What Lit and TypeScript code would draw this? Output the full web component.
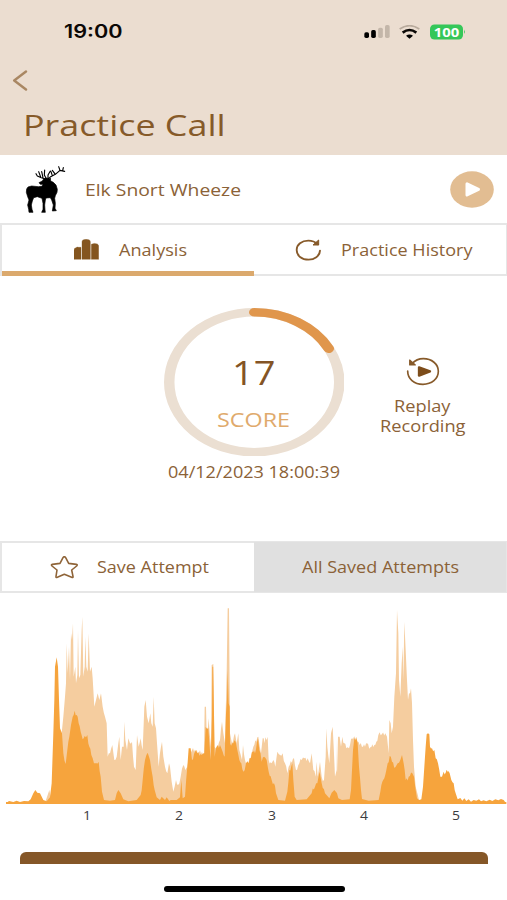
import { LitElement, html, svg, css } from "lit";
import { customElement, property } from "lit/decorators.js";

type Point = [number, number];

const shift = (dx: number, pts: number[]): Point[] => {
  const out: Point[] = [];
  for (let i = 0; i < pts.length; i += 2) out.push([pts[i] + dx, pts[i + 1]]);
  return out;
};

// Both series use a 1521 x 630 canvas, floor at y = 611.
const FLOOR = 611;

const REFERENCE_CALL: Point[] = [
  ...shift(0, [135,608,143,585,148,570,152,590,160,560,178,430,185,400,190,350,195,290,198,250,200,130,203,220,207,140,210,240,213,100,216,120,219,70,221,230,226,200,228,250,232,225,234,90,237,235,241,225,245,90,247,50,250,230,254,200,256,110,259,200,263,215,266,100,270,215,275,200,278,235,283,320,288,300,293,280,298,300,303,280,308,320,315,350,320,370,323,470,330,460,337,435,343,480,350,470,355,430,358,410,362,480,366,440,371,440,373,365,376,420,381,450,385,415,390,430,396,425,402,500,407,510,411,405,416,440,422,415,428,450,433,320,437,300,441,350,446,370,451,340,454,370,458,380,461,290,464,370,468,385,471,430,476,500,483,440,486,425,490,470,495,500,502,520,507,490]),
  ...shift(510, [0,500,5,545,10,575,18,540,24,555,32,530,40,495,46,510,52,500,60,450,102,460,104,320,108,320,110,400,114,380,116,355,119,400,123,440,125,195,130,192,133,440,140,440,150,420,156,365,160,400,165,430,167,340,170,220,173,25,177,25,180,400,186,430,195,400,200,430,205,400,208,450,216,480,219,435,225,480,235,490,245,460,250,440,265,410,273,460,278,415,284,430,286,412,290,420,293,410,296,480,305,490,310,480,316,500,322,455,330,465,338,460,345,490,352,520,356,500,372,475,378,510,388,490,395,480,403,475,413,475,420,490,425,460,430,510,437,530,440,485,443,530,450,485,455,530,462,540,467,470,469,385,472,440,478,490,483,400,488,380,491,440,495,530,500,510,501,410]),
  ...shift(1011, [0,410,1,520,3,410,8,410,12,440,16,410,22,430,28,445,36,445,45,415,58,410,68,435,78,440,90,430,100,442,112,435,118,425,124,405,135,402,145,400,150,410,155,460,157,360,161,370,164,400,168,380,172,290,177,220,180,30,184,100,186,240,190,290,194,190,197,140,199,240,202,65,206,150,210,240,213,300,216,280,222,265,225,310,228,420,231,500,236,560,241,580,246,600]),
];

const PLAYER_CALL: Point[] = [
  ...shift(0, [20,608,27,603,40,606,50,602,60,606,72,603,85,604,92,598,100,580,106,570,112,578,120,580,130,600,140,604,150,592,155,550,160,400,163,300,165,200,170,172,174,200,177,300,180,385,186,400,190,460,197,492,202,450,208,410,213,375,218,350,224,332,230,345,236,370,242,395,248,418,254,408,262,405,268,440,274,465,282,490,290,490,296,485,302,530,306,575,312,600,330,602,345,600,350,580,355,570,362,580,370,598,385,604,410,600,422,585,428,540,435,480,443,458,450,480,458,530,464,570,470,592,480,600,485,590,495,600,500,592,508,603]),
  ...shift(510, [2,600,20,600,30,592,34,540,38,595,45,590,52,500,56,445,62,445,66,480,75,455,82,460,95,465,103,460,107,380,115,385,119,440,122,480,126,350,127,200,129.5,200,132,340,134,470,140,440,150,435,158,455,164,470,168,340,171,300,173,210,176,310,179,320,180,430,190,430,197,425,202,450,208,480,214,490,220,515,228,490,236,490,246,455,255,460,264,415,268,450,275,485,282,470,290,480,296,515,305,540,312,550,318,580,325,600,345,602,352,575,358,510,367,490,370,540,374,590,380,600,410,598,425,580,435,560,442,550,449,515,455,550,465,580,478,595,485,578,493,570,500,578]),
  ...shift(1011, [0,580,4,595,15,600,38,598,42,570,48,450,52,415,58,415,62,430,66,500,72,570,75,597,95,602,125,600,130,575,136,545,142,535,148,510,152,490,158,468,165,485,175,502,182,490,190,480,195,465,200,490,206,540,215,530,226,520,231,530,236,570,240,595,246,600,253,598,258,560,262,500,266,440,269,403,277,403,279,440,285,445,292,450,296,475,303,490,310,530,315,530,320,515,326,518,332,515,338,520,343,540,350,550,356,580,362,598,370,594,376,602,382,595,388,603,395,598,402,605,410,600,418,602,426,598,432,604,440,601,448,604,458,599,466,603,475,598,484,601,492,597,500,600,506,608]),
];

/** Adds fine sample-to-sample variation between the envelope's points. */
const roughen = (pts: Point[]): Point[] => {
  const out: Point[] = [];
  pts.forEach(([x, y], i) => {
    out.push([x, y]);
    const next = pts[i + 1];
    if (!next || (y > 560 && next[1] > 560)) return;
    const n = Math.floor((next[0] - x) / 3);
    for (let k = 1; k < n; k++) {
      const t = k / n;
      const wobble = ((i * 37 + k * 61) % 17) - 8;
      out.push([x + (next[0] - x) * t, y + (next[1] - y) * t + wobble]);
    }
  });
  return out;
};

const area = (pts: Point[]): string =>
  `${pts[0][0]},${FLOOR} ${roughen(pts).map(([x, y]) => `${x.toFixed(1)},${y.toFixed(1)}`).join(" ")} ${pts[pts.length - 1][0]},${FLOOR}`;

/** One line of text stretched to an exact width; its box is centred on the capitals. */
@customElement("fit-text")
export class FitText extends LitElement {
  @property() text = "";
  @property({ type: Number }) width = 100;
  @property({ type: Number }) size = 16;

  static styles = css`
    :host { display: block; flex: none; }
    svg { display: block; overflow: visible; }
    text { fill: currentColor; }
  `;

  render() {
    return html`<svg width=${this.width} height=${this.size}>
      <text x="0" y=${this.size * 0.857} font-size=${this.size}
        textLength=${this.width} lengthAdjust="spacingAndGlyphs">${this.text}</text>
    </svg>`;
  }
}

@customElement("status-bar")
export class StatusBar extends LitElement {
  static styles = css`
    :host { display: flex; height: 43px; padding: 20.5px 41.5px 0 64px; box-sizing: border-box;
      justify-content: space-between; align-items: flex-start; color: #0b0806; }
    .time { font-family: Inter, sans-serif; font-weight: 600; padding-top: 2.5px; }
    .icons { display: flex; align-items: flex-start; padding-top: 3px; }
    svg { display: block; }
    .wifi { margin: 1px 9.5px 0 9.5px; }
    .signal { margin-top: 1.8px; }
    .off { fill: #c3b6a9; }
    .batt { font: 700 12.5px "Open Sans", sans-serif; fill: #fff; }
  `;
  render() {
    return html`
      <fit-text class="time" text="19:00" width="58.5" size="18"></fit-text>
      <div class="icons">
        <svg class="signal" width="26" height="14" viewBox="0 0 78 42">
          <rect x="1" y="22" width="14" height="17" rx="5"/>
          <rect x="21.500" y="15" width="14" height="24" rx="5"/>
          <rect class="off" x="42.500" y="8" width="14" height="31" rx="5"/>
          <rect class="off" x="63" y="0" width="14" height="39" rx="5"/>
        </svg>
        <svg class="wifi" width="21" height="14" viewBox="0 0 63 42">
          <path d="M2 12 Q31.500 -8 61 12" fill="none" stroke="#b8aa9c" stroke-width="5"/>
          <path d="M11 23 Q31.500 7 52 23" fill="none" stroke="#0b0806" stroke-width="8"/>
          <path d="M21 32 Q31.500 25 42 32 L31.500 41Z"/>
        </svg>
        <svg width="36" height="16" viewBox="0 0 36 16">
          <rect x="0" y="0.500" width="33" height="15" rx="4.500" fill="#35c759"/>
          <path d="M34 5.500 q1.700 2.300 0 4.600z" fill="#35c759"/>
          <text class="batt" x="3.800" y="12.500" textLength="25.500" lengthAdjust="spacingAndGlyphs">100</text>
        </svg>
      </div>`;
  }
}

@customElement("score-ring")
export class ScoreRing extends LitElement {
  @property({ type: Number }) score = 0;
  static styles = css`
    :host { display: grid; width: 180.5px; height: 148.5px; }
    .ring, .inner { grid-area: 1 / 1; }
    .ring { display: block; width: 100%; height: 100%; }
    .inner { display: flex; flex-direction: column; align-items: center; gap: 20.5px; padding-top: 50px; }
    .value { color: #845425; }
    .label { color: #e0aa6c; }
  `;
  render() {
    return html`
      <svg class="ring" viewBox="0 0 100 100" preserveAspectRatio="none">
        <circle cx="50" cy="50" r="47.100" fill="none" stroke="#ebdfd2" stroke-width="5.800"/>
        <circle cx="50" cy="50" r="47.100" fill="none" stroke="#e0964c" stroke-width="5.800"
          pathLength="100" stroke-dasharray="${this.score} 100" stroke-linecap="round" transform="rotate(-90 50 50)"/>
      </svg>
      <div class="inner">
        <fit-text class="value" text=${String(this.score)} width="43.5" size="32"></fit-text>
        <fit-text class="label" text="SCORE" width="73" size="19.5"></fit-text>
      </div>`;
  }
}

@customElement("wave-chart")
export class WaveChart extends LitElement {
  static styles = css`
    :host { display: block; }
    svg { display: block; }
    .ref { fill: #f5cd9f; }
    .own { fill: #f6a43d; }
    .axis { display: flex; padding-left: 41.2px; color: #3c3c40;
      font-family: "Open Sans", sans-serif; font-weight: 500; }
    .tick { width: 92.2px; flex: none; display: flex; justify-content: center; }
  `;
  render() {
    return html`
      <svg width="507" height="210" viewBox="0 0 1521 630">
        <polygon class="ref" points=${area(REFERENCE_CALL)}/>
        ${svg`<polygon class="own" points=${area(PLAYER_CALL)}/>`}
        <rect class="own" x="18" y="606" width="1501" height="6"/>
      </svg>
      <div class="axis">
        ${[1, 2, 3, 4, 5].map((n) => html`<div class="tick"><fit-text text=${n} width="8" size="12"></fit-text></div>`)}
      </div>`;
  }
}

@customElement("app-root")
export class AppRoot extends LitElement {
  static styles = css`
    :host { display: flex; flex-direction: column; width: 507px; height: 900px; overflow: hidden;
      background: #fff; color: #8b6237; font-family: "Open Sans", "Noto Sans", sans-serif; }
    svg { display: block; flex: none; }
    .header { height: 155px; background: #ebddd0; }
    .back { margin: 27px 0 0 12px; }
    .title { margin: 18.500px 0 0 23px; color: #865a29; }
    .call { display: flex; align-items: center; height: 68px; box-sizing: border-box; padding: 0 13.500px 0 25px; }
    .name { margin: 0 auto 0 17.500px; }
    .pair { display: flex; box-sizing: border-box; border: 2px solid #e6e6e6; border-right-width: 1px; }
    .tabs { height: 53px; }
    .cell { width: 50%; flex: none; display: flex; align-items: center; box-sizing: border-box; }
    .active { box-shadow: inset 0 -5px #dba96d; margin-bottom: -2px; padding-bottom: 2px; }
    .analysis { padding-left: 72px; gap: 20px; }
    .history { padding-left: 41px; gap: 18.500px; }
    .panel { height: 265px; display: grid; grid-template-columns: 163.500px 180.500px 1fr; align-content: start;
      padding-top: 31.500px; box-sizing: border-box; }
    .replay { display: flex; flex-direction: column; align-items: center; padding: 49px 6px 0 0; }
    .replay svg { margin-bottom: 12px; }
    .line2 { margin-top: 4.500px; }
    .date { grid-column: 2; margin: 9px 0 0 4px; }
    .actions { height: 52px; }
    .save { padding-left: 48px; gap: 18px; }
    .saved { background: #e0e0e0; justify-content: center; margin: -1px 0; }
    .chart { margin-top: 7px; }
    .foot { height: 76.500px; display: flex; flex-direction: column; margin-top: auto; }
    .button { margin: 28px 19px 0 20px; height: 12.500px; border-radius: 6px 6px 0 0; background: #855728; flex: none; }
    .home { width: 180.500px; height: 6px; border-radius: 3px; background: #000; margin: 21.500px 0 0 164px; flex: none; }
  `;

  render() {
    return html`
      <header class="header">
        <status-bar></status-bar>
        <svg class="back" width="16" height="21" viewBox="0 0 16 21">
          <path d="M14 1.500 L2.200 10.500 L14 19.500" fill="none" stroke="#a98763" stroke-width="2.400" stroke-linecap="round" stroke-linejoin="round"/>
        </svg>
        <fit-text class="title" text="Practice Call" width="202.500" size="30"></fit-text>
      </header>

      <section class="call">
        <svg width="42" height="48.500" viewBox="75 30 126 145.500">
          <path d="M117 83 L127 78 L131 72 L141 69 L147 73 L151 69 L152 78 L160 82 L168 90 L172 103 L171 112 L166 122 L164 130 L166 145 L165 160 L169 167 L157 168 L160 150 L155 135 L151 128 L138 129 L136 135 L134 150 L135 165 L136 172 L125 172 L129 163 L129 145 L126 130 L112 125 L101 128 L97 138 L94 150 L96 163 L99 172 L87 172 L86 163 L83 150 L87 135 L83 125 L79 112 L80 102 L84 96 L95 93 L115 95 L126 94 L129 88 L121 88Z" stroke="#000" stroke-width="2" stroke-linejoin="round"/>
          <path d="M136 72 L124 68 L112 63 L108 56 M122 66 L116 50 M129 68 L125 50 M139 71 L133 60 L134 45 M144 71 L144 60 L151 48 M145 72 L152 65 L166 58 L180 46 L194 49 M180 46 L176 35 M188 47 L190 38 M166 58 L157 46 M157 62 L153 50" fill="none" stroke="#000" stroke-width="3.400" stroke-linejoin="round" stroke-linecap="round"/>
        </svg>
        <fit-text class="name" text="Elk Snort Wheeze" width="156" size="17"></fit-text>
        <svg width="44" height="37" viewBox="0 0 44 37">
          <ellipse cx="22" cy="18.500" rx="21.800" ry="18.200" fill="#e2bd92"/>
          <path d="M17 12.800 L28.500 18.300 L17 24Z" fill="#fff" stroke="#fff" stroke-width="3" stroke-linejoin="round"/>
        </svg>
      </section>

      <nav class="pair tabs">
        <div class="cell active analysis">
          <svg width="25" height="21" viewBox="0 0 75 63">
            <path d="M0 61 V33 Q0 27 6 26 Q9 23 14 25 H21 V61Z M24 61 V8 Q24 3 29 2 Q36 -1 44 2 Q49 3 49 8 V61Z M52 61 V16 Q61 11 70 15 Q74 17 74 22 V61Z" fill="#84551f" stroke="#84551f" stroke-width="1" stroke-linejoin="round"/>
          </svg>
          <fit-text text="Analysis" width="68" size="15.8"></fit-text>
        </div>
        <div class="cell history">
          <svg width="27" height="22" viewBox="0 0 81 66">
            <path d="M75 35 C74 52 58 62 41 62 C20 62 5 50 5 33 C5 17 20 5 40 5 C52 5 61 9 69 16" fill="none" stroke="#875a2a" stroke-width="5.500" stroke-linecap="round"/>
            <path d="M71 3 V18 H54 Z" fill="#875a2a" stroke="#875a2a" stroke-width="3" stroke-linejoin="round"/>
          </svg>
          <fit-text text="Practice History" width="131.500" size="15.8"></fit-text>
        </div>
      </nav>

      <section class="panel">
        <span></span>
        <score-ring score="17"></score-ring>
        <div class="replay">
          <svg width="34" height="29" viewBox="0 0 102 87">
            <path d="M18 20 C28 9 40 5 52 5 C77 5 97 21 97 43 C97 66 77 82 51 82 C24 82 5 65 5 42" fill="none" stroke="#875a2a" stroke-width="5" stroke-linecap="round"/>
            <path d="M11 9 V24 H28 Z" fill="#875a2a" stroke="#875a2a" stroke-width="3.500" stroke-linejoin="round"/>
            <path d="M39 31 L72 43 L39 56Z" fill="#7d4d1b" stroke="#7d4d1b" stroke-width="7" stroke-linejoin="round"/>
          </svg>
          <fit-text text="Replay" width="56.500" size="15.800"></fit-text>
          <fit-text class="line2" text="Recording" width="85.500" size="15.800"></fit-text>
        </div>
        <fit-text class="date" text="04/12/2023 18:00:39" width="172" size="15.600"></fit-text>
      </section>

      <div class="pair actions">
        <div class="cell save">
          <svg width="29" height="24" viewBox="0 0 87 72">
            <path d="M43 6 Q45 5 47 8 L56 25 L79 28 Q84 29 80 33 L65 45 L69 64 Q70 69 65 67 L43 58 L22 67 Q17 69 18 64 L21 45 L6 33 Q2 29 7 28 L30 25 L39 8 Q41 5 43 6Z" fill="none" stroke="#8f6438" stroke-width="4.800" stroke-linejoin="round"/>
          </svg>
          <fit-text text="Save Attempt" width="112" size="15.800"></fit-text>
        </div>
        <div class="cell saved">
          <fit-text text="All Saved Attempts" width="157" size="15.800"></fit-text>
        </div>
      </div>

      <wave-chart class="chart"></wave-chart>

      <footer class="foot">
        <div class="button"></div>
        <div class="home"></div>
      </footer>`;
  }
}
